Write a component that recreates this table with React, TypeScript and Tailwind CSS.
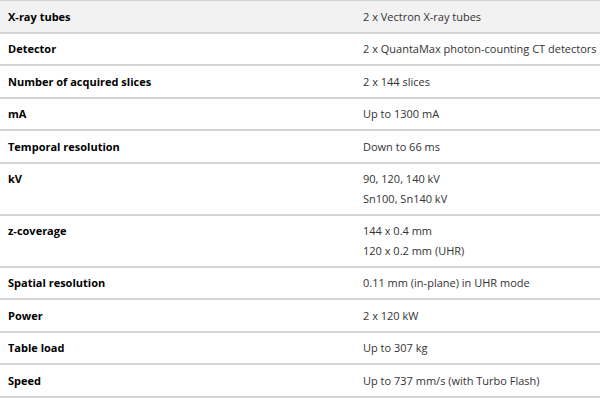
import React from 'react';

const specs: { label: string; value: string[] }[] = [
  { label: 'X-ray tubes', value: ['2 x Vectron X-ray tubes'] },
  { label: 'Detector', value: ['2 x QuantaMax photon-counting CT detectors'] },
  { label: 'Number of acquired slices', value: ['2 x 144 slices'] },
  { label: 'mA', value: ['Up to 1300 mA'] },
  { label: 'Temporal resolution', value: ['Down to 66 ms'] },
  { label: 'kV', value: ['90, 120, 140 kV', 'Sn100, Sn140 kV'] },
  { label: 'z-coverage', value: ['144 x 0.4 mm', '120 x 0.2 mm (UHR)'] },
  { label: 'Spatial resolution', value: ['0.11 mm (in-plane) in UHR mode'] },
  { label: 'Power', value: ['2 x 120 kW'] },
  { label: 'Table load', value: ['Up to 307 kg'] },
  { label: 'Speed', value: ['Up to 737 mm/s (with Turbo Flash)'] },
];

const App = () => {
  return (
    <div className="w-[600px] h-[398px] bg-white overflow-hidden font-['Open_Sans',sans-serif] text-[11px] leading-[19.5px]">
      <table className="w-full border-collapse border-t border-[#d4d4d4]">
        <tbody>
          {specs.map((row, i) => (
            <tr key={row.label} className={`border-b-2 border-[#d4d4d4] ${i === 0 ? 'bg-[#f2f2f2]' : 'bg-white'}`}>
              <td className="w-[355px] pl-2 py-[5.5px] align-top font-bold text-black whitespace-nowrap">{row.label}</td>
              <td className="pl-2 py-[5.5px] align-top text-[#333] whitespace-nowrap">
                {row.value.map((v) => (
                  <div key={v}>{v}</div>
                ))}
              </td>
            </tr>
          ))}
        </tbody>
      </table>
    </div>
  );
};

export default App;
